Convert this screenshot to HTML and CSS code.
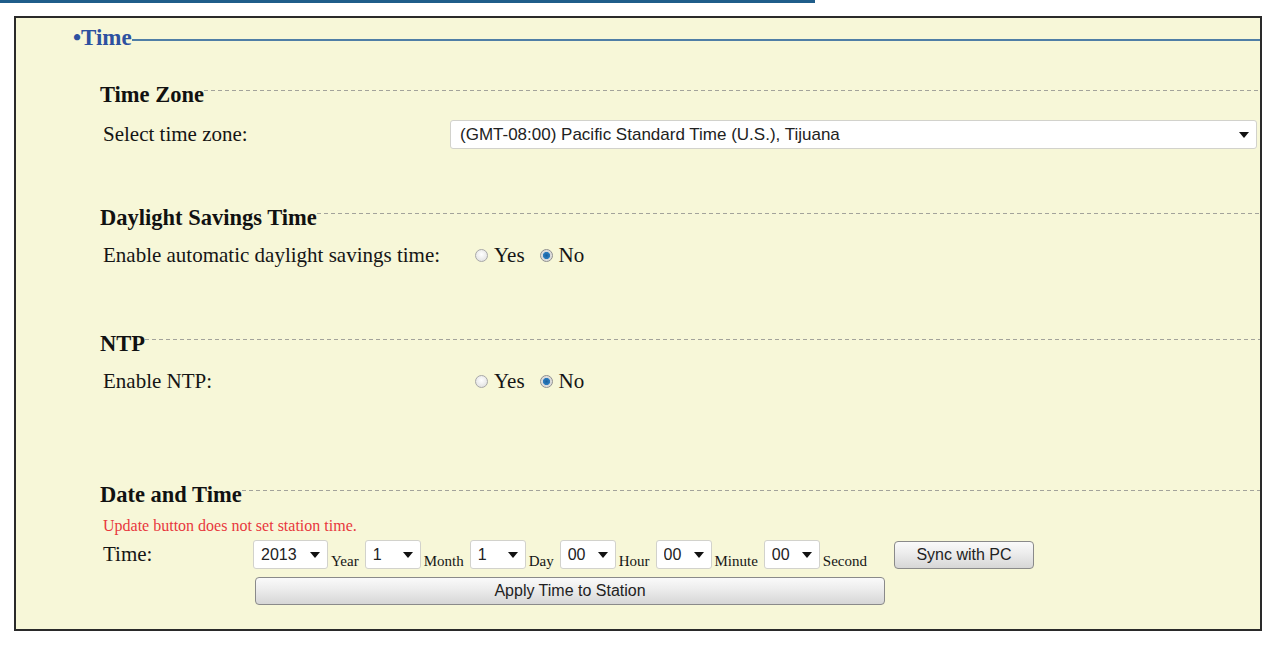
FILE: index.html
```html
<!DOCTYPE html>
<html lang="en">
<head>
    <meta charset="UTF-8">
    <meta name="viewport" content="width=device-width, initial-scale=1.0">
    <title>Time Settings</title>
    <link rel="stylesheet" href="styles.css">
</head>
<body>
    <div class="topbar"></div>

    <div class="panel">
        <div class="title">
            <span class="title-text">&bull;Time</span>
            <div class="rule"></div>
        </div>

        <section class="group group-zone">
            <div class="group-head">
                <h2>Time Zone</h2>
                <div class="dash"></div>
            </div>
            <div class="row">
                <label class="label" for="tz">Select time zone:</label>
                <span class="sel wide">
                    <select id="tz">
                        <option>(GMT-08:00) Pacific Standard Time (U.S.), Tijuana</option>
                    </select>
                </span>
            </div>
        </section>

        <section class="group group-dst">
            <div class="group-head">
                <h2>Daylight Savings Time</h2>
                <div class="dash"></div>
            </div>
            <div class="row">
                <span class="label">Enable automatic daylight savings time:</span>
                <div class="radios">
                    <label><input type="radio" name="dst"> Yes</label>
                    <label><input type="radio" name="dst" checked> No</label>
                </div>
            </div>
        </section>

        <section class="group group-ntp">
            <div class="group-head">
                <h2>NTP</h2>
                <div class="dash"></div>
            </div>
            <div class="row">
                <span class="label">Enable NTP:</span>
                <div class="radios">
                    <label><input type="radio" name="ntp"> Yes</label>
                    <label><input type="radio" name="ntp" checked> No</label>
                </div>
            </div>
        </section>

        <section class="group group-date">
            <div class="group-head">
                <h2>Date and Time</h2>
                <div class="dash"></div>
            </div>
            <p class="note">Update button does not set station time.</p>
            <div class="time-row">
                <span class="time-label">Time:</span>
                <span class="sel year"><select><option>2013</option></select></span>
                <span class="unit">Year</span>
                <span class="sel small"><select><option>1</option></select></span>
                <span class="unit">Month</span>
                <span class="sel small"><select><option>1</option></select></span>
                <span class="unit">Day</span>
                <span class="sel small"><select><option>00</option></select></span>
                <span class="unit">Hour</span>
                <span class="sel small"><select><option>00</option></select></span>
                <span class="unit">Minute</span>
                <span class="sel small"><select><option>00</option></select></span>
                <span class="unit">Second</span>
                <button class="btn sync">Sync with PC</button>
            </div>
            <div class="apply-row">
                <button class="btn apply">Apply Time to Station</button>
            </div>
        </section>
    </div>
</body>
</html>
```

FILE: styles.css
```css
body {
    margin: 0;
    background: #fff;
    font-family: "Liberation Serif", "Times New Roman", serif;
    color: #151515;
}
.topbar {
    width: 815px;
    height: 3px;
    background: #1f5d8a;
}
.panel {
    box-sizing: border-box;
    width: 1248px;
    margin: 13px 0 0 14px;
    padding: 8px 0 24px 0;
    border: 2px solid #2a2a2a;
    background: #f7f7d8;
}

/* section title with the solid rule */
.title {
    display: flex;
    align-items: flex-start;
    padding-left: 57px;
}
.title-text {
    font-size: 23px;
    line-height: 24px;
    font-weight: bold;
    color: #2d51a0;
}
.rule {
    flex: 1;
    height: 2px;
    margin-top: 13px;
    background: #4f7ea6;
}

/* groups */
.group {
    padding-left: 84px;
}
.group-zone { margin-top: 32px; }
.group-dst { margin-top: 56px; }
.group-ntp { margin-top: 63px; }
.group-date { margin-top: 88px; }

.group-head {
    display: flex;
    align-items: flex-start;
}
.group-head h2 {
    margin: 0;
    font-size: 22.5px;
    line-height: 26px;
    font-weight: bold;
    color: #111;
}
.dash {
    flex: 1;
    height: 1px;
    margin-top: 8px;
    background: repeating-linear-gradient(to right, #a3a39b 0 4px, transparent 4px 7px);
}

.row {
    display: flex;
    align-items: center;
    margin-top: 12px;
    padding-left: 3px;
    font-size: 21px;
    min-height: 24px;
}
.label {
    width: 347px;
    flex-shrink: 0;
}

/* selects */
.sel {
    position: relative;
    display: inline-block;
}
.sel::after {
    content: "";
    position: absolute;
    right: 8px;
    top: 50%;
    margin-top: -3px;
    border-left: 5px solid transparent;
    border-right: 5px solid transparent;
    border-top: 6px solid #111;
    pointer-events: none;
}
.sel select {
    -webkit-appearance: none;
    appearance: none;
    display: block;
    box-sizing: border-box;
    height: 29px;
    padding: 0 22px 0 7px;
    border: 1px solid #d2d2cc;
    border-radius: 3px;
    background: #fff;
    font-family: "Liberation Sans", Arial, sans-serif;
    font-size: 16px;
    color: #222;
}
.wide select {
    width: 807px;
    padding-left: 9px;
    font-size: 17px;
}
.year select { width: 75px; }
.small select { width: 56px; }

/* radios */
.radios {
    display: flex;
    gap: 15px;
    margin-left: 25px;
}
.radios label {
    display: flex;
    align-items: center;
    gap: 6px;
}
.radios input {
    -webkit-appearance: none;
    appearance: none;
    width: 13px;
    height: 13px;
    margin: 0;
    border: 1px solid #a8a8a8;
    border-radius: 50%;
    background: radial-gradient(circle at 50% 40%, #fff 0%, #e6e6e6 70%, #d0d0d0 100%);
}
.radios input:checked {
    border-color: #8f8f8f;
    background: radial-gradient(circle, #1c5f9c 0%, #2a7cc0 42%, #d8d8d8 50%, #ececec 100%);
}

/* date and time */
.note {
    margin: 9px 0 0 3px;
    font-size: 16px;
    line-height: 18px;
    color: #e8383d;
}
.time-row {
    display: flex;
    align-items: center;
    margin-top: 5px;
    padding-left: 3px;
}
.time-label {
    width: 150px;
    font-size: 21px;
}
.unit {
    align-self: flex-end;
    margin: 0 6px -2px 3px;
    font-size: 15px;
    line-height: 20px;
}
.btn {
    box-sizing: border-box;
    height: 28px;
    border: 1px solid #8a8a8a;
    border-radius: 4px;
    background: linear-gradient(to bottom, #fafafa 0%, #ececec 45%, #d6d6d6 100%);
    font-family: "Liberation Sans", Arial, sans-serif;
    font-size: 16px;
    color: #222;
    padding: 0;
}
.sync {
    width: 140px;
    margin-left: 21px;
}
.apply-row {
    margin-top: 8px;
    padding-left: 155px;
}
.apply {
    width: 630px;
}
```
